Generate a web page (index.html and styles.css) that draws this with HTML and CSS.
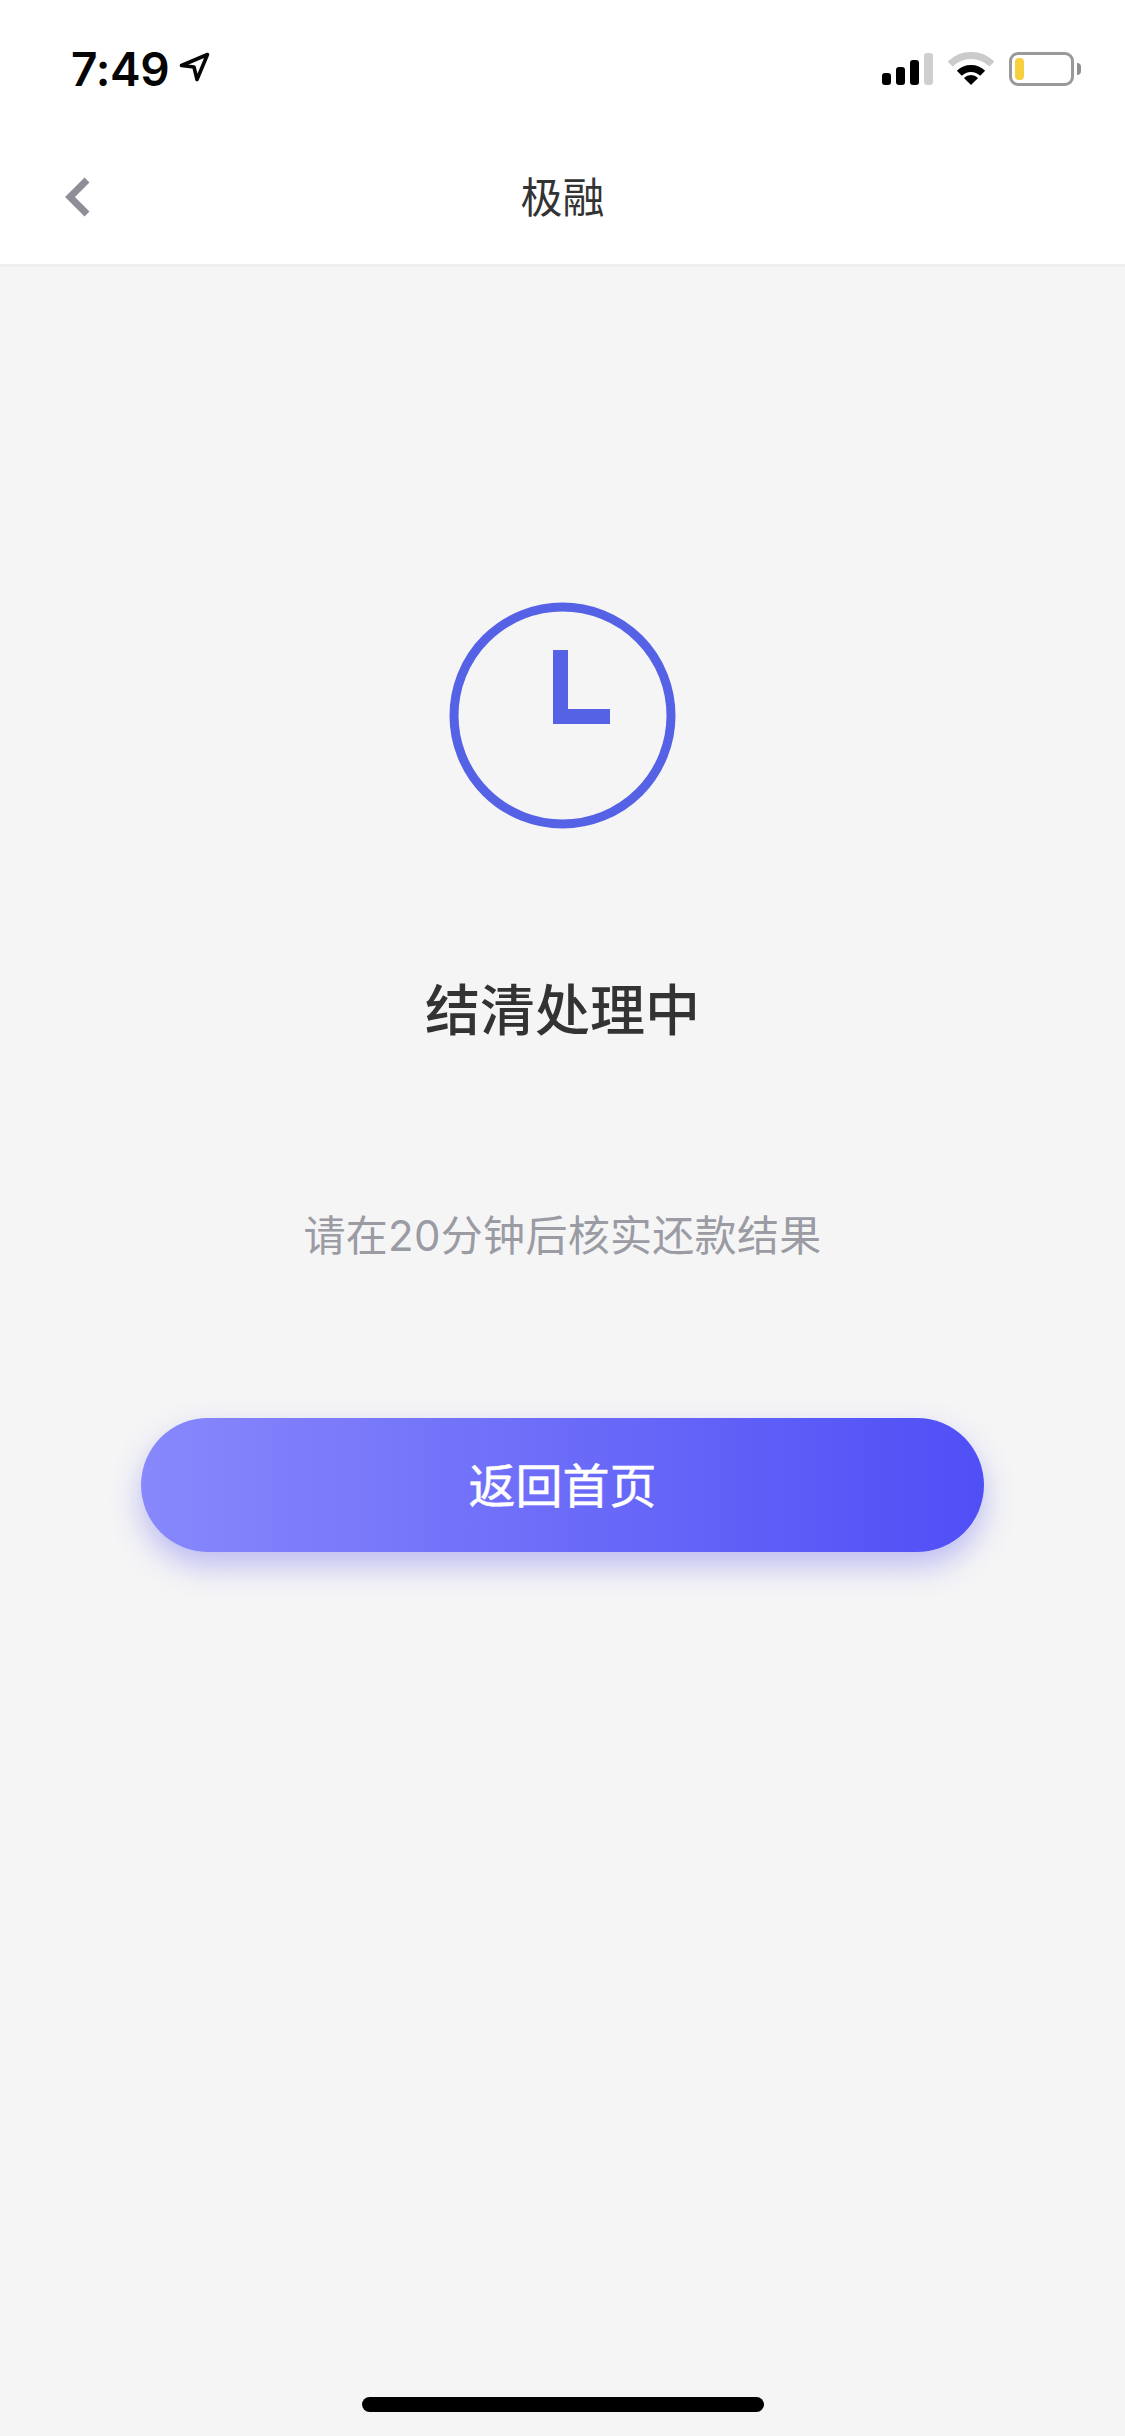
FILE: index.html
```html
<!DOCTYPE html>
<html lang="zh-CN">
<head>
<meta charset="utf-8">
<title>极融</title>
<link rel="stylesheet" href="styles.css">
</head>
<body>
<div class="page">
  <header class="top">
    <div class="status">
      <div class="status-left">
        <span class="time">7:49</span>
        <svg class="loc" viewBox="0 0 32 32"><path d="M3.5 14.5 29.5 3.5 19 28.5 16 16Z"/></svg>
      </div>
      <div class="status-right">
        <div class="signal">
          <span class="bar b1"></span><span class="bar b2"></span><span class="bar b3"></span><span class="bar b4"></span>
        </div>
        <svg class="wifi" viewBox="0 0 46 34">
          <path class="wifi-off" d="M2.14 12.14A29.5 29.5 0 0 1 43.86 12.14"/>
          <path class="wifi-on" d="M11.33 21.33A16.5 16.5 0 0 1 34.67 21.33"/>
          <path class="wifi-dot" d="M23 33 15.93 25.93A10 10 0 0 1 30.07 25.93Z"/>
        </svg>
        <div class="battery"><div class="battery-body"><span class="battery-fill"></span></div><span class="battery-nub"></span></div>
      </div>
    </div>
    <nav class="nav">
      <svg class="back" viewBox="0 0 26 40"><path d="M22 3 5 20 22 37"/></svg>
      <h1 class="nav-title">极融</h1>
      <span></span>
    </nav>
  </header>
  <main class="main">
    <svg class="clock" viewBox="0 0 227 227">
      <circle class="clock-ring" cx="113.5" cy="113.5" r="108.5"/>
      <path class="clock-hand" d="M111.5 48V114.5H161"/>
    </svg>
    <h2 class="heading">结清处理中</h2>
    <p class="sub">请在20分钟后核实还款结果</p>
    <button class="btn" type="button">返回首页</button>
  </main>
  <div class="home"></div>
</div>
</body>
</html>
```
FILE: styles.css
```css
* { box-sizing: border-box; }
html, body { margin: 0; padding: 0; }
body { background: #f5f5f6; font-family: "Noto Sans CJK SC", "Noto Sans", sans-serif; }
.page { width: 1125px; height: 2436px; display: flex; flex-direction: column; overflow: hidden; }
.top { background: #fff; border-bottom: 3px solid #eeeeef; height: 267px; }
.status { height: 138px; display: flex; justify-content: space-between; align-items: center; padding: 0 44px 0 71px; }
.status-left { display: flex; align-items: center; gap: 9px; }
.time { font-family: Inter, "Liberation Sans", sans-serif; font-weight: 600; font-size: 46px; line-height: 46px; letter-spacing: -0.3px; color: #050505; }
.loc { width: 32px; height: 32px; margin-top: -4px; }
.loc path { fill: none; stroke: #050505; stroke-width: 3.6; stroke-linejoin: round; }
.status-right { display: flex; align-items: center; }
.signal { display: flex; align-items: flex-end; gap: 5px; height: 32px; margin-right: 15px; }
.bar { width: 9px; background: #000; border-radius: 3px; }
.b1 { height: 12px; }
.b2 { height: 18px; }
.b3 { height: 25px; }
.b4 { height: 32px; background: #cfcfcf; }
.wifi { width: 46px; height: 34px; margin-right: 15px; }
.wifi path { fill: none; stroke-width: 7; }
.wifi .wifi-off { stroke: #cbcbcb; }
.wifi .wifi-on { stroke: #000; }
.wifi .wifi-dot { fill: #000; stroke: none; }
.battery { display: flex; align-items: center; gap: 3px; }
.battery-body { width: 65px; height: 34px; border: 3px solid #999; border-radius: 9px; padding: 3px; display: flex; }
.battery-fill { width: 9px; background: #f8cf3f; border-radius: 4px; }
.battery-nub { width: 4px; height: 12px; background: #8f8f8f; border-radius: 0 6px 6px 0; }
.nav { height: 120px; display: grid; grid-template-columns: 1fr auto 1fr; align-items: center; padding: 0 0 3px 65px; }
.back { width: 26px; height: 40px; }
.back path { fill: none; stroke: #8e8e99; stroke-width: 7; }
.nav-title { margin: 0 0 3px; font-size: 42px; font-weight: 400; line-height: 60px; color: #333; padding-right: 65px; }
.main { flex: 1; display: flex; flex-direction: column; align-items: center; }
.clock { width: 227px; height: 227px; margin: 335px 0 0 0; flex: none; }
.clock-ring { fill: none; stroke: #5562e6; stroke-width: 9; }
.clock-hand { fill: none; stroke: #5562e6; stroke-width: 15; }
.heading { margin: 139px 0 0; font-size: 55px; line-height: 76px; font-weight: 500; color: #333; }
.sub { margin: 165px 0 0; font-family: Inter, "Noto Sans CJK SC", sans-serif; font-size: 42px; line-height: 54px; font-weight: 400; letter-spacing: 0.3px; color: #9a9ba3; }
.btn { margin-top: 155px; width: 843px; height: 134px; border: 0; border-radius: 67px; padding: 0 0 6px; background: linear-gradient(90deg, #8888fc 0%, #4f4ff6 100%); box-shadow: 0 14px 30px rgba(80, 80, 235, 0.34); color: #fff; font-family: inherit; font-size: 47px; font-weight: 400; -webkit-text-stroke: 0.5px #fff; }
.home { width: 402px; height: 15px; flex: none; margin: 0 auto 24px; background: #000; border-radius: 8px; }
```
